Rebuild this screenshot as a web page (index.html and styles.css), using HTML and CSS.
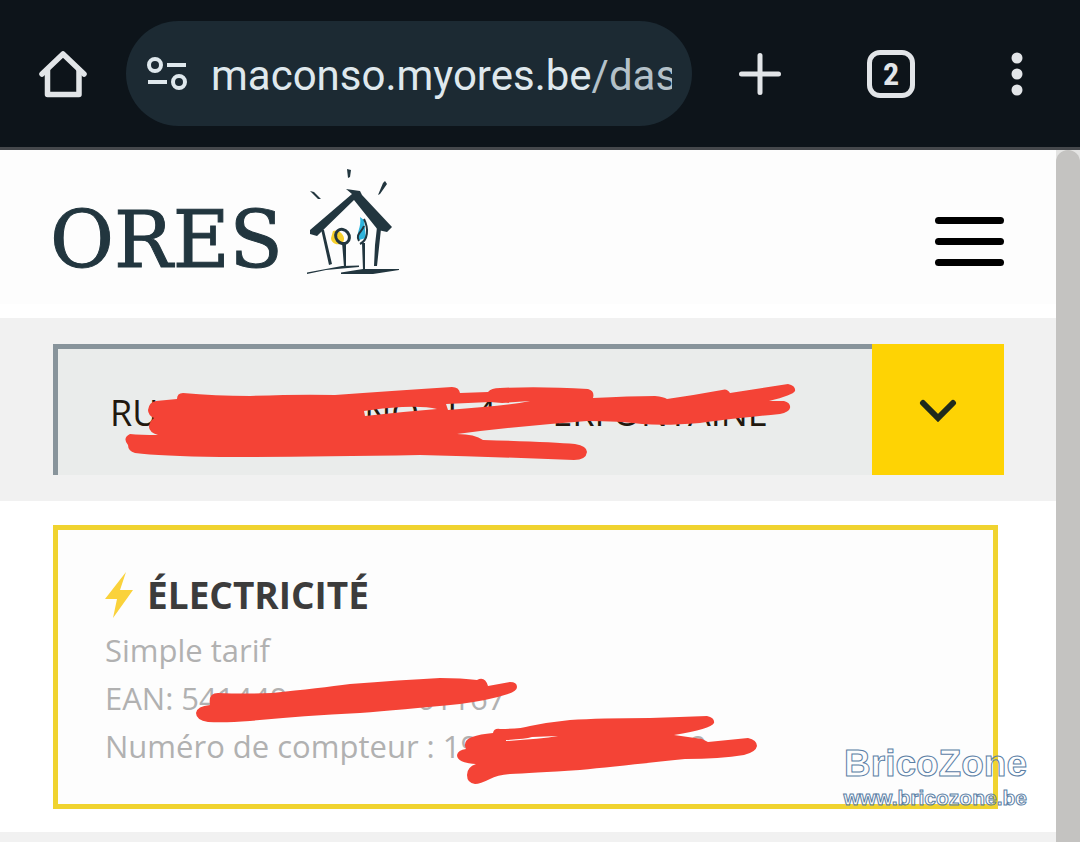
FILE: index.html
```html
<!DOCTYPE html>
<html lang="fr">
<head>
<meta charset="utf-8">
<meta name="viewport" content="width=device-width, initial-scale=1">
<title>ORES - Ma conso</title>
<link rel="stylesheet" href="styles.css">
</head>
<body>
<div class="browser-bar">
  <button class="bar-button" type="button" aria-label="Accueil">
    <svg width="48" height="48" viewBox="0 0 48 48" fill="none" stroke="#e2e5e8" stroke-width="5.500" stroke-linecap="round" stroke-linejoin="round"><path d="M3 24 24 4 45 24"/><path d="M8.500 20V44.500H40V20"/></svg>
  </button>
  <div class="address">
    <svg class="site-icon" width="40" height="34" viewBox="0 0 40 34" fill="none" stroke="#dfe8ed" stroke-width="4"><circle cx="8" cy="8" r="6"/><path d="M20 8H39M1 25H20"/><circle cx="32" cy="25" r="6"/></svg>
    <div class="url">maconso.myores.be<span class="path">/das</span></div>
  </div>
  <button class="bar-button" type="button" aria-label="Nouvel onglet">
    <svg width="48" height="48" viewBox="0 0 48 48" stroke="#e2e5e8" stroke-width="5" stroke-linecap="round"><path d="M5.500 24H42.500M24 5.500V42.500"/></svg>
  </button>
  <button class="bar-button" type="button" aria-label="Onglets"><span class="tab-count">2</span></button>
  <button class="bar-button" type="button" aria-label="Menu du navigateur">
    <svg width="12" height="44" viewBox="0 0 12 44" fill="#e2e5e8"><circle cx="6" cy="6" r="5.500"/><circle cx="6" cy="22" r="5.500"/><circle cx="6" cy="38" r="5.500"/></svg>
  </button>
</div>
<div class="viewport">
  <div class="page">
    <header class="site-header">
      <a class="logo" href="#">
        <span>ORES</span>
        <svg width="94" height="108" viewBox="305 167 94 108" fill="#22363f">
          <path fill="#f7d02c" d="M332 231C338 228 346 237 342 242C337 247 330 243 330 238Z"/>
          <path fill="#2fb4dc" d="M359 217L363 220L365 238L358 240C354 233 361 228 359 217Z"/>
          <path d="M345 189L359 191L361 195L391 227L386 232L377 230L353 200L316 236L309 234L309 230L351 194Z"/>
          <path d="M346 169L350 170L349 177L347 178ZM309 191L313 192L320 199L317 199ZM384 181L386 184L379 194L377 195L382 183Z"/>
          <path d="M320 229L323 230L331 264L328 265ZM376 227L380 229L376 266L373 266L374 245ZM341 242L345 242L345 267L343 267ZM361 243L364 243L364 270L362 270Z"/>
          <path d="M306 272.500L341 266L358 265.500L358 267L325 270L306 274ZM340 272.500L362 269L398 269L398 270L372 274L340 274Z"/>
          <ellipse cx="341.500" cy="236.500" rx="6.500" ry="7.500" transform="rotate(-38 341.500 236.500)" fill="none" stroke="#22363f" stroke-width="3"/>
          <path d="M363 219C368 229 367 240 359 244M363 226C361 232 354 234 358 241" fill="none" stroke="#22363f" stroke-width="2"/>
        </svg>
      </a>
      <button class="menu" type="button" aria-label="Menu"><i></i><i></i><i></i></button>
    </header>
    <section class="address-section">
      <div class="picker">
        <select aria-label="Adresse">
          <option>RU&nbsp;&nbsp;&nbsp;&nbsp;&nbsp;&nbsp;&nbsp;&nbsp;&nbsp;&nbsp;&nbsp;&nbsp;&nbsp;&nbsp;&nbsp;&nbsp;&nbsp;&nbsp;&nbsp;&nbsp;&nbsp;&nbsp;NO&nbsp;&nbsp;&nbsp;L&nbsp;4&nbsp;&nbsp;&nbsp;&nbsp;&nbsp;&nbsp;ERFONTAINE</option>
        </select>
        <span class="chevron">
          <svg width="38" height="24" viewBox="0 0 38 24" fill="none" stroke="#1f2a1c" stroke-width="6" stroke-linecap="round"><path d="M4 5 19 20 34 5"/></svg>
        </span>
        <svg class="scribble scribble-address" width="680" height="84" viewBox="120 380 680 84" fill="#f44336" fill-rule="evenodd"><path d="M148 410Q149 402 156 401L177 399Q177 393 183 393Q215 396 250 396Q300 394 335 395Q390 391 452 387Q459 387 460 393L488 392Q491 388 500 388Q540 386 588 389Q595 391 593 398Q630 396 655 396Q664 397 667 399Q695 395 722 390Q727 388 730 393L788 384Q796 386 795 391Q793 395 769 401L784 401Q791 403 790 408Q789 412 780 414Q720 420 700 423Q665 426 642 424Q620 421 587 421Q520 426 457 434Q475 434 483 440Q550 442 575 444Q587 446 587 452Q586 460 574 460Q500 457 420 455Q300 457 220 457Q160 456 135 453Q128 451 128 445Q122 438 130 434Q140 435 158 435Q149 432 149 427Q149 422 154 418Q148 415 148 410ZM364 411Q382 408 402 407Q425 406 437 409Q400 412 365 416ZM446 404L490 402L502 403L530 401Q510 405 483 407L448 410Z"/></svg>
      </div>
    </section>
    <section class="meters">
      <article class="card">
        <h2>
          <svg width="28" height="46" viewBox="0 0 28 46" fill="#fad23b"><path d="M21 0 0 27H12L8 46 28 18H15Z"/></svg>
          ÉLECTRICITÉ
        </h2>
        <p>Simple tarif</p>
        <p>EAN: 541449<span class="gap gap-ean"></span>61167</p>
        <p>Numéro de compteur : 19<span class="gap gap-meter"></span>9</p>
        <svg class="scribble scribble-meter" width="570" height="120" viewBox="190 670 570 120" fill="#f44336" fill-rule="evenodd"><path d="M196 713Q197 706 210 705Q208 693 218 693Q245 694 272 693Q320 688 350 684Q400 680 440 678Q462 678 477 680Q485 676 488 686L510 682Q517 682 517 687Q517 691 508 694Q490 700 460 704Q400 710 360 713Q300 716 250 721Q225 723 208 722Q196 720 196 713Z"/><path d="M465 746Q464 740 472 737Q480 734 493 733Q494 728 500 729Q520 729 530 726Q550 722 570 720Q600 718 650 718Q680 717 707 716Q715 718 714 723Q711 729 674 735L702 739L708 742L748 738Q757 740 757 746Q756 752 744 755Q720 759 685 759Q620 766 580 770Q530 773 510 774Q497 775 490 779Q480 784 475 784Q467 783 467 775Q467 767 476 764Q457 763 457 755Q458 750 466 749ZM506 740Q525 739 532 737L558 736Q540 739 506 741Z"/></svg>
      </article>
      <aside class="watermark"><span class="brand">BricoZone</span><span class="site">www.bricozone.be</span></aside>
    </section>
    <div class="rest"></div>
  </div>
  <div class="scroll-track"><div class="scroll-thumb"></div></div>
</div>
</body>
</html>
```
FILE: styles.css
```css
* { box-sizing: border-box; }
body {
  margin: 0;
  min-height: 100vh;
  display: flex;
  flex-direction: column;
  background: #fff;
  font-family: "Open Sans", "Noto Sans", sans-serif;
}
button { border: 0; padding: 0; background: none; }
.browser-bar {
  display: grid;
  grid-template-columns: 126px 1fr 136px 126px 126px;
  align-items: center;
  height: 150px;
  background: #0d141a;
  border-bottom: 3px solid #45484c;
}
.bar-button { display: flex; align-items: center; justify-content: center; height: 104px; }
.address {
  display: flex;
  align-items: center;
  gap: 24px;
  height: 105px;
  padding: 0 20px 0 21px;
  border-radius: 53px;
  background: #1c2a33;
  min-width: 0;
}
.site-icon { flex: none; }
.url {
  flex: 1;
  padding-top: 4px;
  overflow: hidden;
  white-space: nowrap;
  font-family: Roboto, sans-serif;
  font-size: 42px;
  line-height: 56px;
  color: #dfe8ed;
}
.path { color: #b4c1c9; }
.tab-count {
  display: flex;
  align-items: center;
  justify-content: center;
  width: 48px;
  height: 48px;
  border: 5px solid #e2e5e8;
  border-radius: 13px;
  color: #e2e5e8;
  font: bold 32px "Roboto Condensed", "Liberation Sans Narrow", Roboto, sans-serif;
}
.viewport { flex: 1; display: flex; }
.page { flex: 1; min-width: 0; display: flex; flex-direction: column; }
.scroll-track { width: 24px; background: #e4e4e3; }
.scroll-thumb { height: 100%; background: #c4c3c1; border-radius: 12px 12px 0 0; }
.site-header {
  display: flex;
  justify-content: space-between;
  align-items: center;
  height: 168px;
  padding: 0 52px 0 50px;
  background: #fdfdfd;
  border-bottom: 14px solid #fff;
}
.logo {
  display: flex;
  align-items: center;
  gap: 23px;
  height: 100%;
  padding-bottom: 12px;
  color: #22363f;
  text-decoration: none;
  font: 78px/80px "DejaVu Serif", serif;
  -webkit-text-stroke: 1px #22363f;
}
.logo span { padding-top: 38px; }
.menu { display: flex; flex-direction: column; gap: 14px; width: 69px; padding-top: 29px; }
.menu i { height: 7px; border-radius: 4px; background: #000; }
.address-section { padding: 26px 52px 26px 53px; background: #f1f1f1; }
.picker { position: relative; display: flex; height: 131px; }
.picker select {
  flex: 1;
  min-width: 0;
  appearance: none;
  margin: 0;
  padding: 0 0 0 52px;
  border: solid #88949b;
  border-width: 5px 0 0 5px;
  border-radius: 0;
  background: #eaeceb;
  color: #21180f;
  font: 36px "Open Sans", sans-serif;
}
.chevron {
  display: flex;
  align-items: center;
  justify-content: center;
  width: 132px;
  background: #fed304;
  pointer-events: none;
}
.scribble { position: absolute; pointer-events: none; }
.scribble-address { left: 67px; top: 36px; }
.meters { position: relative; padding: 24px 58px 23px 53px; }
.card {
  position: relative;
  padding: 38px 47px 34px;
  border: 5px solid #f0d32f;
  background: #fdfdfd;
}
.card h2 {
  display: flex;
  align-items: center;
  gap: 14px;
  margin: 0 0 4px;
  color: #3c3c3c;
  font-size: 37px;
  line-height: 54px;
}
.card p { margin: 0; color: #b1b1b1; font-size: 31px; line-height: 48px; white-space: nowrap; }
.gap { display: inline-block; }
.gap-ean { width: 129px; }
.gap-meter { width: 211px; }
.scribble-meter { left: 132px; top: 140px; }
.watermark {
  position: absolute;
  right: 29px;
  bottom: 22px;
  display: flex;
  flex-direction: column;
  align-items: flex-end;
  color: transparent;
  font-family: "Liberation Sans", Arial, sans-serif;
  -webkit-text-stroke: 1px #5b80a6;
}
.brand { font-size: 37px; line-height: 44px; font-weight: bold; }
.site { font-size: 21px; line-height: 24px; font-weight: bold; }
.rest { flex: 1; background: #f1f1f1; }
```
